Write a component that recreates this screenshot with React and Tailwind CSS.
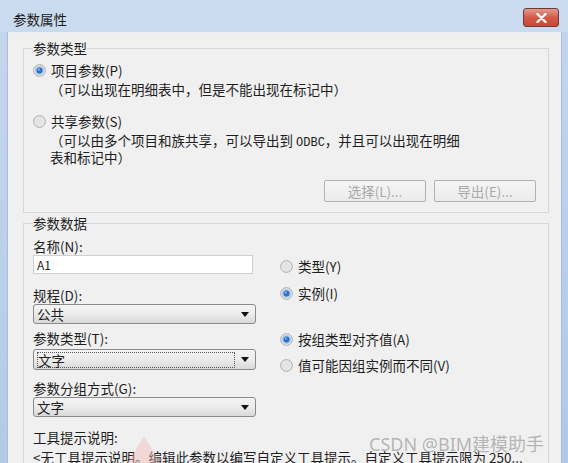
import React from "react";

function Radio({ checked }) {
  return (
    <svg width="13" height="13" viewBox="0 0 13 13" className="shrink-0">
      <circle cx="6.5" cy="6.5" r="5.8" fill="#f3f3f3" stroke="#a4a4a4" strokeWidth="1" />
      <circle cx="6.5" cy="6.5" r="4.6" fill="#e4e4e4" />
      {checked && (
        <>
          <circle cx="6.5" cy="6.5" r="4.6" fill="#a9cbec" />
          <circle cx="6.5" cy="6.5" r="3" fill="#2f6fc4" />
          <circle cx="5.8" cy="5.6" r="1.1" fill="#8fc0f0" />
        </>
      )}
    </svg>
  );
}

function RadioRow({ checked, label, className = "" }) {
  return (
    <div className={"flex h-[16px] items-center gap-[5px] " + className}>
      <Radio checked={checked} />
      <span className="leading-[16px]">{label}</span>
    </div>
  );
}

function Select({ value, focus, className = "" }) {
  return (
    <div
      className={
        "flex items-center justify-between rounded-[3px] border border-[#8a8a8a] bg-gradient-to-b from-[#f4f4f4] via-[#ececec] to-[#d9d9d9] pl-[3px] pr-[6px] " +
        className
      }
    >
      {focus ? (
        <div className="flex h-[16px] w-[198px] items-center border border-dotted border-[#555] leading-[14px]">
          {value}
        </div>
      ) : (
        <span className="leading-[16px]">{value}</span>
      )}
      <svg width="8" height="5" viewBox="0 0 8 5">
        <path d="M0 0 L8 0 L4 5 Z" fill="#111" />
      </svg>
    </div>
  );
}

function Btn({ label }) {
  return (
    <div className="flex h-[22px] items-center justify-center rounded-[2px] border border-[#b1b1b1] bg-gradient-to-b from-[#f5f5f5] to-[#ebebeb] text-[#a8a8a8]">
      {label}
    </div>
  );
}

export default function App() {
  return (
    <div
      className="relative h-[463px] w-[568px] overflow-hidden bg-gradient-to-b from-[#cbdcf0] to-[#b6cce8] text-[13.5px] text-[#1e1e1e]"
      style={{ fontFamily: '"Noto Sans CJK SC", "Noto Sans", sans-serif' }}
    >
      {/* title bar */}
      <div className="flex h-[32px] items-start justify-between">
        <div className="pl-[13px] pt-[10px] text-[13.5px] leading-[18px] text-[#1a1a1a]">参数属性</div>
        <div className="mr-[9px] mt-[8px] flex h-[19px] w-[36px] items-center justify-center rounded-[3px] border border-[#6e3b3b] bg-gradient-to-b from-[#e29a8e] via-[#d25a48] to-[#c64a36]">
          <svg width="11" height="10" viewBox="0 0 11 10">
            <path d="M1.5 1 L9.5 9 M9.5 1 L1.5 9" stroke="#fff" strokeWidth="2.4" strokeLinecap="round" />
          </svg>
        </div>
      </div>

      <div className="flex h-[431px]">
        <div className="w-[8px] border-r border-[#a9bdd6] bg-gradient-to-b from-[#c4d6ec] to-[#b3cae6]" />
        <div className="flex-1 border-t border-[#e8eef6] bg-[#f0f0f0]">
          {/* group 1 */}
          <fieldset className="ml-[15px] mr-[12px] mt-[7px] border border-[#d7d7d7] px-[9px] pb-[10px] pt-0">
            <legend className="h-[16px] px-0 leading-[16px]">参数类型</legend>
            <RadioRow checked label="项目参数(P)" className="mt-[6px]" />
            <div className="mt-[3px] h-[16px] pl-[17px] leading-[16px]">（可以出现在明细表中，但是不能出现在标记中）</div>
            <RadioRow label="共享参数(S)" className="mt-[16px]" />
            <div className="mt-[4px] pl-[17px] leading-[14px]">
              （可以由多个项目和族共享，可以导出到{" "}
              <span className="font-['Liberation_Mono'] text-[12px]">ODBC</span>，并且可以出现在明细
              <br />
              表和标记中）
            </div>
            <div className="mt-[16px] flex justify-end gap-[8px] pr-[3px]">
              <div className="w-[102px]">
                <Btn label="选择(L)..." />
              </div>
              <div className="w-[102px]">
                <Btn label="导出(E)..." />
              </div>
            </div>
          </fieldset>

          {/* group 2 */}
          <fieldset className="ml-[15px] mr-[12px] mt-[2px] border border-[#d7d7d7] px-[9px] pb-[20px] pt-0">
            <legend className="h-[16px] px-0 leading-[16px]">参数数据</legend>
            <div className="flex">
              <div className="flex w-[223px] flex-col">
                <div className="mt-[7px] h-[16px] leading-[16px]">名称(N):</div>
                <div className="mt-[1px] flex h-[19px] w-[220px] items-center border border-[#d0d0d0] bg-white pl-[3px] text-[12px]">
                  A1
                </div>
                <div className="mt-[13px] h-[16px] leading-[16px]">规程(D):</div>
                <Select value="公共" className="mt-[1px] h-[20px]" />
                <div className="mt-[6px] h-[16px] leading-[16px]">参数类型(T):</div>
                <Select value="文字" focus className="mt-[3px] h-[21px]" />
                <div className="mt-[10px] h-[16px] leading-[16px]">参数分组方式(G):</div>
                <Select value="文字" className="mt-[1px] h-[20px]" />
              </div>
              <div className="ml-[24px] flex flex-col">
                <RadioRow label="类型(Y)" className="mt-[27px]" />
                <RadioRow checked label="实例(I)" className="mt-[11px]" />
                <RadioRow checked label="按组类型对齐值(A)" className="mt-[30px]" />
                <RadioRow label="值可能因组实例而不同(V)" className="mt-[10px]" />
              </div>
            </div>
            <div className="mt-[12px] h-[16px] leading-[16px]">工具提示说明:</div>
            <div className="mt-[4px] h-[16px] whitespace-nowrap leading-[16px]">
              &lt;无工具提示说明。编辑此参数以编写自定义工具提示。自定义工具提示限为 250...
            </div>
          </fieldset>
        </div>
        <div className="w-[7px] border-l border-[#a9bdd6] bg-gradient-to-b from-[#c0d6f0] to-[#aec9ea]" />
      </div>

      {/* watermark decorations */}
      <svg className="pointer-events-none absolute left-[128px] top-[436px]" width="32" height="27" viewBox="0 0 32 27">
        <path d="M16 0 L32 27 L0 27 Z" fill="#f3b8b8" opacity="0.45" />
      </svg>
      <div
        className="pointer-events-none absolute left-[369px] top-[432px] whitespace-nowrap text-[18px] leading-[24px] text-[#9a9a9a]/70"
        style={{ fontFamily: '"Noto Sans", "Noto Sans CJK SC", sans-serif' }}
      >
        CSDN @BIM建模助手
      </div>
    </div>
  );
}
